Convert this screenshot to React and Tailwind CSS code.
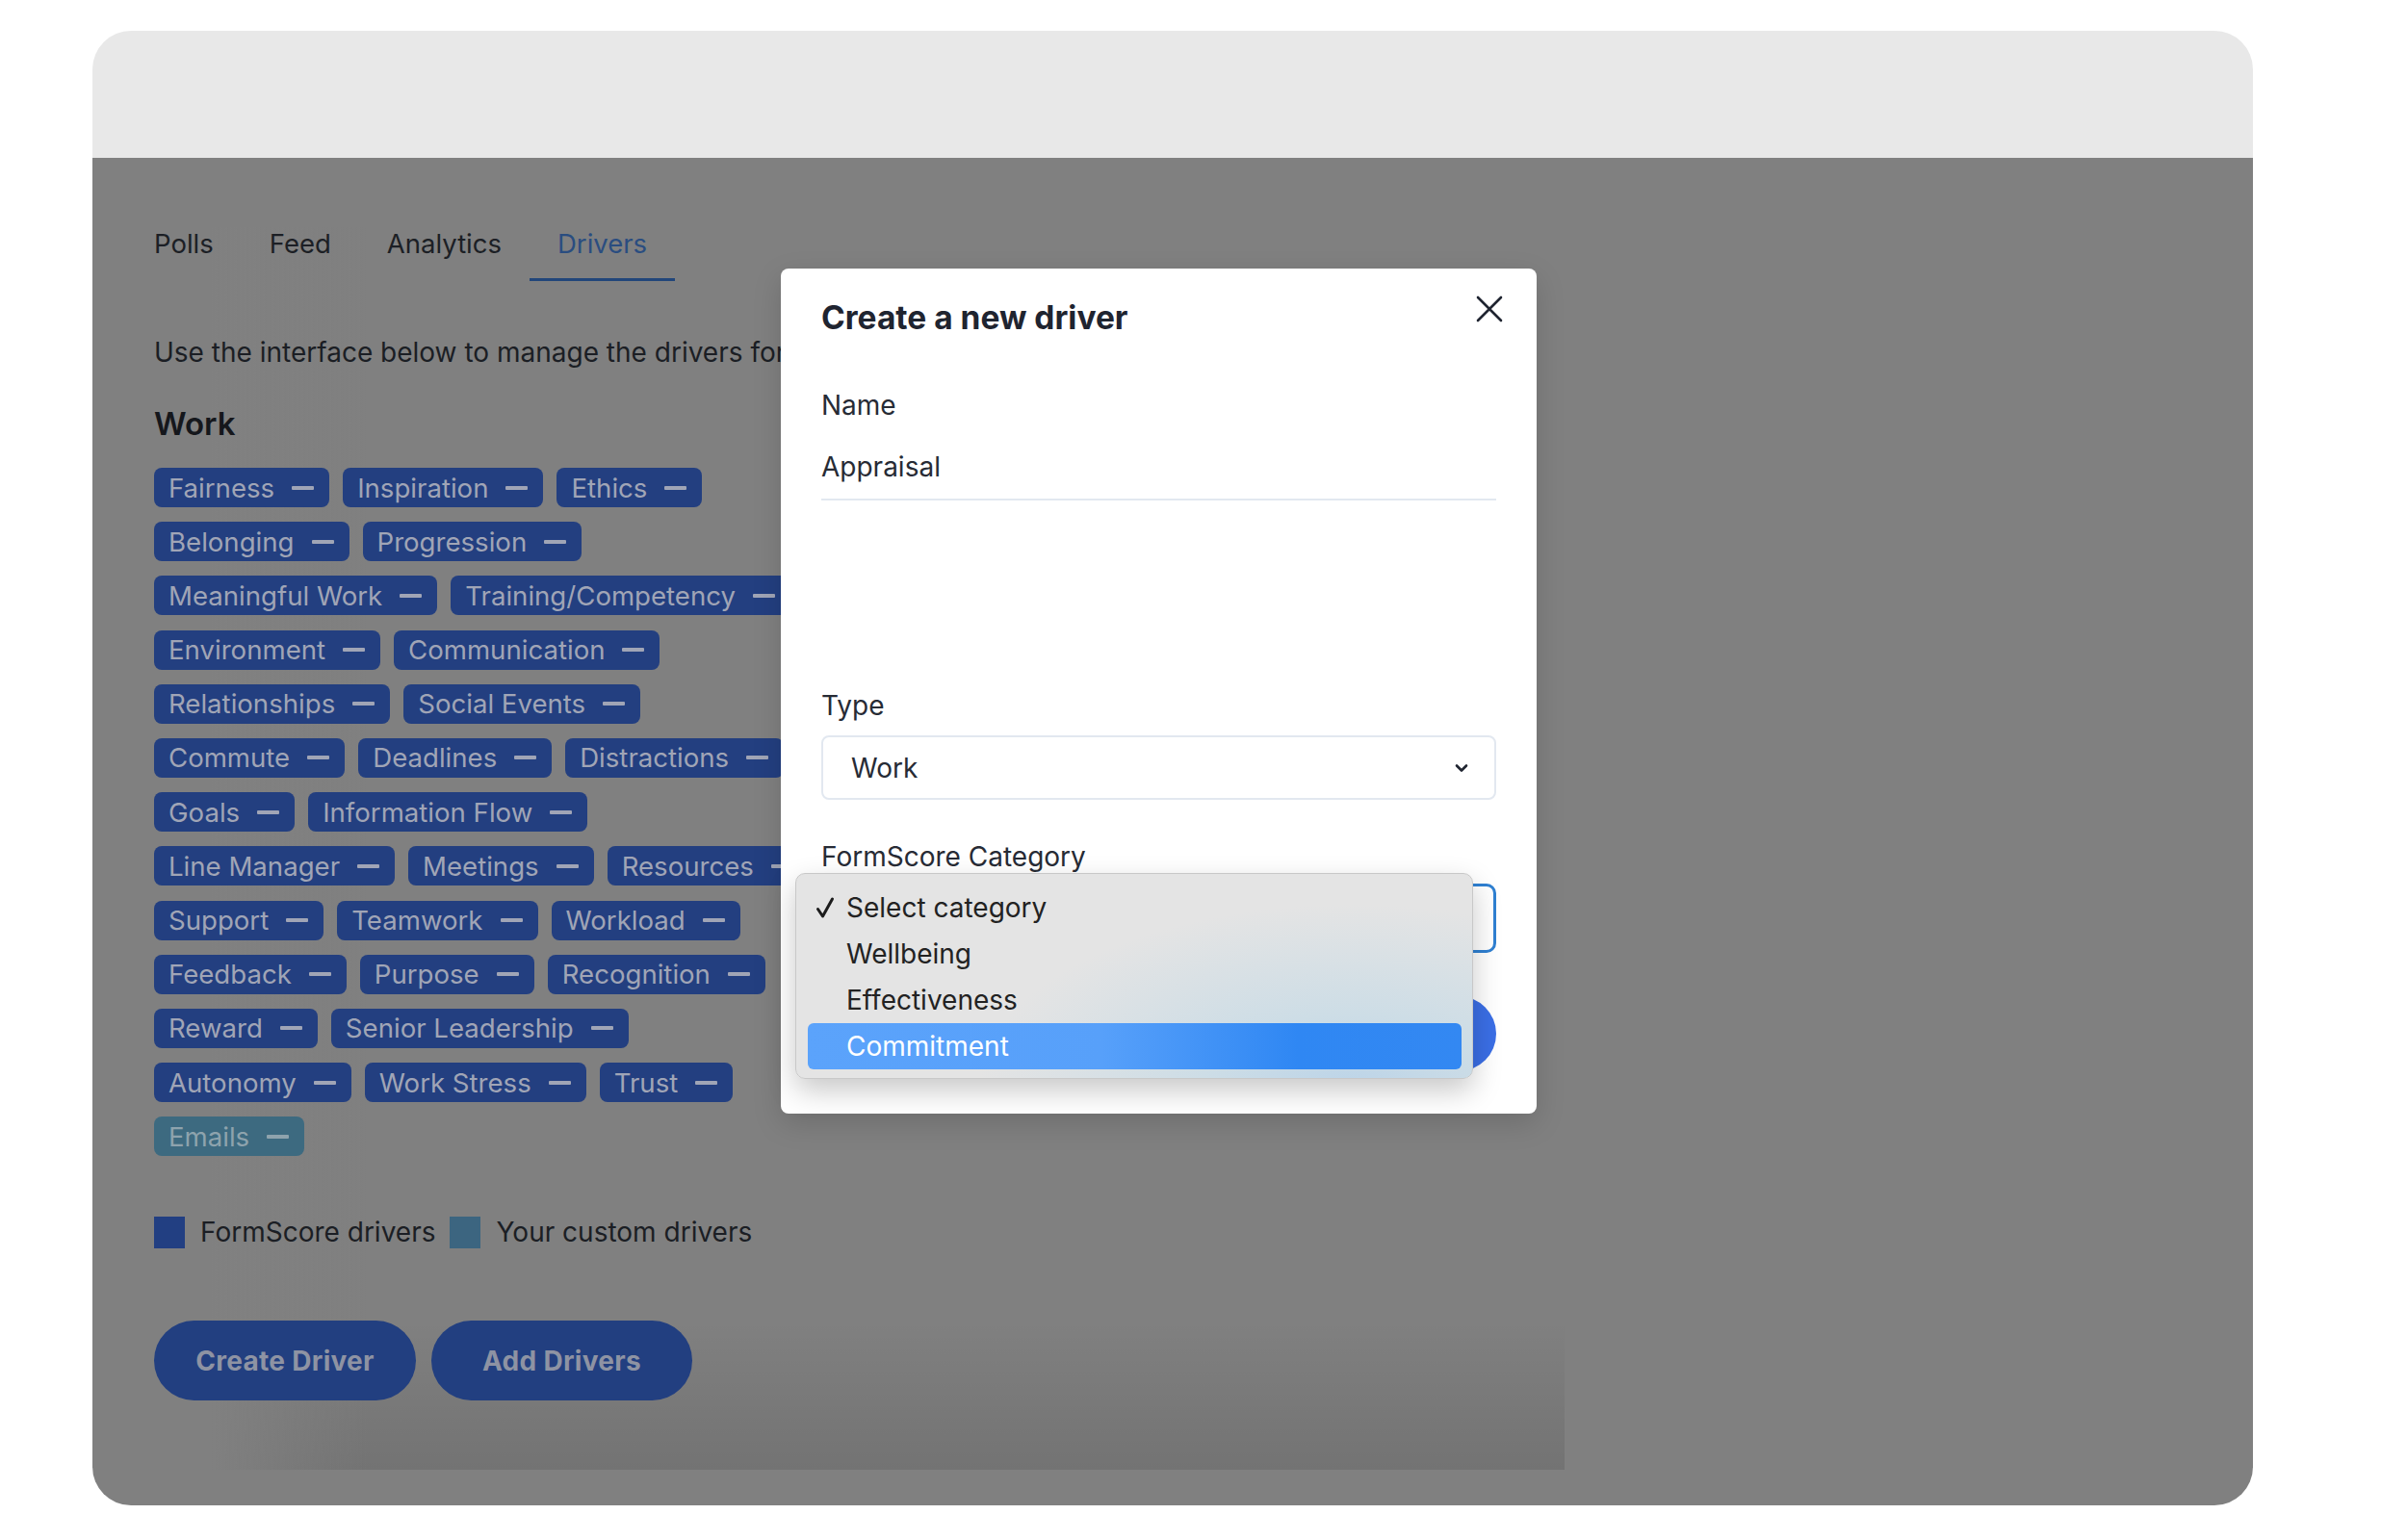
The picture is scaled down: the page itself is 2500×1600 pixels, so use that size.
// Drivers page with the "Create a new driver" modal and open category menu
const driverRows = [
    ["Fairness", "Inspiration", "Ethics"],
    ["Belonging", "Progression"],
    ["Meaningful Work", "Training/Competency"],
    ["Environment", "Communication"],
    ["Relationships", "Social Events"],
    ["Commute", "Deadlines", "Distractions"],
    ["Goals", "Information Flow"],
    ["Line Manager", "Meetings", "Resources"],
    ["Support", "Teamwork", "Workload"],
    ["Feedback", "Purpose", "Recognition"],
    ["Reward", "Senior Leadership"],
    ["Autonomy", "Work Stress", "Trust"],
];

const tabs = ["Polls", "Feed", "Analytics", "Drivers"];

const categories = ["Select category", "Wellbeing", "Effectiveness", "Commitment"];

// Étiquette d'un driver
const DriverTag = ({ label, custom }) => (
    <span
        className={
            custom
                ? "flex items-center h-[41px] pl-[15px] pr-[16px] gap-[18px] rounded-[8px] bg-[#3d6a80] text-[#8ea3ad] text-[27.6px] leading-[34px]"
                : "flex items-center h-[41px] pl-[15px] pr-[16px] gap-[18px] rounded-[8px] bg-[#233f80] text-[#a0a5b6] text-[27.6px] leading-[34px]"
        }
    >
        <span className="whitespace-nowrap">{label}</span>
        <span className="w-[23px] h-[4px] rounded-[1px] bg-current" />
    </span>
);

const CloseIcon = () => (
    <svg width="30" height="30" viewBox="0 0 30 30" fill="none" stroke="#1f2430" strokeWidth="2.6" strokeLinecap="round" aria-hidden="true">
        <path d="M3 3 27 27M27 3 3 27" />
    </svg>
);

const ChevronIcon = () => (
    <svg width="16" height="10" viewBox="0 0 16 10" fill="none" stroke="#1f2430" strokeWidth="2.6" strokeLinecap="round" strokeLinejoin="round" aria-hidden="true">
        <path d="M3 2.5 8 7.5 13 2.5" />
    </svg>
);

const CheckIcon = () => (
    <svg width="20" height="24" viewBox="0 0 20 24" fill="none" stroke="#1c1c1c" strokeWidth="3" strokeLinecap="round" strokeLinejoin="round" aria-hidden="true">
        <path d="M2.5 13.5 7.5 21 17.5 3" />
    </svg>
);

// Menu natif ouvert sur la catégorie
const CategoryMenu = () => (
    <div className="absolute left-[15px] top-[628px] w-[704px] h-[214px] rounded-[10px] border border-[#c8c8c8] shadow-[0_12px_30px_rgba(0,0,0,0.22)] bg-[radial-gradient(ellipse_55%_90%_at_82%_105%,#bcd4e8_0%,#cddde6_40%,#e4e4e4_100%)] p-[11px] pl-[12px]">
        {categories.map((cat, i) => {
            const active = i === 3;
            return (
                <div
                    key={cat}
                    className={
                        active
                            ? "flex items-center h-[48px] rounded-[6px] bg-[linear-gradient(to_right,#5ba3fb,#57a0fa_45%,#2f87f3_75%,#3388f2)] text-white"
                            : "flex items-center h-[48px] text-[#222222]"
                    }
                >
                    <span className="w-[40px] pl-[8px] flex items-center">
                        {i === 0 && <CheckIcon />}
                    </span>
                    <span className="text-[28px] leading-[34px]">{cat}</span>
                </div>
            );
        })}
    </div>
);

const CreateDriverModal = () => (
    <div className="absolute left-[715px] top-[247px] w-[785px] bg-white rounded-[8px] px-[42px] pt-[31px] pb-[44px] shadow-[0_10px_30px_rgba(0,0,0,0.15)]">
        <h2 className="text-[33.5px] leading-[40px] font-bold text-[#1f2430]">
            Create a new driver
        </h2>
        <button className="absolute top-[27px] right-[34px]" aria-label="Close">
            <CloseIcon />
        </button>

        <div className="mt-[54px] text-[28px] leading-[34px] text-[#272b35]">Name</div>
        <div className="mt-[30px] pb-[16px] border-b-2 border-[#e2e8f0] text-[28px] leading-[34px] text-[#272b35]">
            Appraisal
        </div>

        <div className="mt-[196px] text-[28px] leading-[34px] text-[#272b35]">Type</div>
        <div className="mt-[14px] h-[67px] flex items-center justify-between rounded-[8px] border-2 border-[#e2e8f0] pl-[29px] pr-[26px] text-[28px] text-[#272b35]">
            <span>Work</span>
            <ChevronIcon />
        </div>

        <div className="mt-[42px] text-[28px] leading-[34px] text-[#272b35]">FormScore Category</div>
        {/* Select ouvert : sa valeur est cachée par le menu */}
        <div className="mt-[11px] h-[72px] flex items-center justify-end rounded-[10px] border-[3px] border-[#2f80d2] pr-[25px]">
            <ChevronIcon />
        </div>

        <button className="mt-[45px] w-full h-[78px] rounded-full bg-[#3b6fe6] text-white text-[28px] font-semibold">
            Create Driver
        </button>

        <CategoryMenu />
    </div>
);

export default function App() {
    return (
        <div className="w-[2500px] h-[1600px] bg-white pt-[32px] pl-[96px] font-['Inter',sans-serif]">
            <div className="relative w-[2244px] h-[1532px] rounded-[40px] overflow-hidden flex flex-col">
                <div className="h-[132px] bg-[#e8e8e8]" />

                <div className="flex-1 bg-[#808080] pt-[72px] pl-[64px]">
                    <div className="w-[1465px] pb-[72px] bg-[linear-gradient(to_right,#808080_60px,rgba(128,128,128,0)_220px),linear-gradient(to_bottom,rgba(0,0,0,0)_88%,rgba(0,0,0,0.1))]">
                        {/* Onglets */}
                        <nav className="flex -ml-[29px]">
                            {tabs.map((tab) => (
                                <span
                                    key={tab}
                                    className={
                                        tab === "Drivers"
                                            ? "px-[29px] pb-[19px] border-b-[3px] border-[#21467a] text-[27.5px] leading-[34px] text-[#2a4d80]"
                                            : "px-[29px] pb-[19px] border-b-[3px] border-transparent text-[27.5px] leading-[34px] text-[#1c1f25]"
                                    }
                                >
                                    {tab}
                                </span>
                            ))}
                        </nav>

                        <p className="mt-[57px] text-[28px] leading-[34px] text-[#1b1e24] whitespace-nowrap">
                            Use the interface below to manage the drivers for your organisation.
                        </p>

                        <h3 className="mt-[35px] text-[33px] leading-[44px] font-semibold text-[#15171c]">
                            Work
                        </h3>

                        {/* Liste des drivers */}
                        <div className="mt-[24px] flex flex-col gap-[15.2px]">
                            {driverRows.map((row) => (
                                <div key={row[0]} className="flex gap-[14px]">
                                    {row.map((label) => (
                                        <DriverTag key={label} label={label} />
                                    ))}
                                </div>
                            ))}
                            <div className="flex gap-[14px]">
                                <DriverTag label="Emails" custom />
                            </div>
                        </div>

                        {/* Légende */}
                        <div className="mt-[62px] flex items-center text-[28px] leading-[34px] text-[#1b1e24]">
                            <span className="w-[32px] h-[33px] bg-[#223f82]" />
                            <span className="ml-[16px]">FormScore drivers</span>
                            <span className="ml-[15px] w-[32px] h-[33px] bg-[#3c6580]" />
                            <span className="ml-[16px]">Your custom drivers</span>
                        </div>

                        <div className="mt-[75px] flex gap-[16px]">
                            <button className="w-[272px] h-[83px] rounded-full bg-[#223f80] text-[#8e93a3] text-[28px] font-bold tracking-[0.3px]">
                                Create Driver
                            </button>
                            <button className="w-[271px] h-[83px] rounded-full bg-[#223f80] text-[#8e93a3] text-[28px] font-bold tracking-[0.3px]">
                                Add Drivers
                            </button>
                        </div>
                    </div>
                </div>

                <CreateDriverModal />
            </div>
        </div>
    );
}
